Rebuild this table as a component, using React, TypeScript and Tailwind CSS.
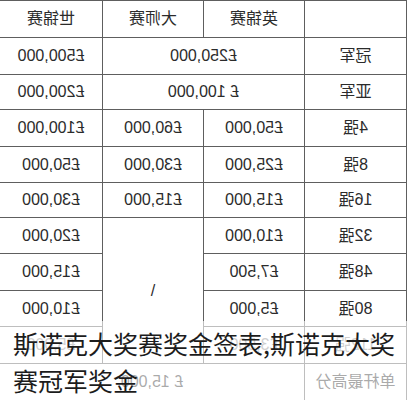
import React from "react";

const td = "border border-[#5e5e5e] text-center align-middle p-0 font-normal";

export default function App() {
  return (
    <div className="relative w-[407px] h-[400px] overflow-hidden bg-white">
      <div className="[transform:scaleX(-1)]">
        <table className="table-fixed border-collapse w-[407px] text-[16px] text-[#2b2b2b] font-['Liberation_Sans','Noto_Sans_CJK_SC',sans-serif]">
          <colgroup>
            <col className="w-[102px]" />
            <col className="w-[101px]" />
            <col className="w-[101px]" />
            <col className="w-[103px]" />
          </colgroup>
          <tbody>
            <tr className="h-[37px]">
              <td className={td}></td>
              <td className={td}>英锦赛</td>
              <td className={td}>大师赛</td>
              <td className={td}>世锦赛</td>
            </tr>
            <tr className="h-[37px]">
              <td className={td}>冠军</td>
              <td className={td} colSpan={2}>£250,000</td>
              <td className={td}>£500,000</td>
            </tr>
            <tr className="h-[35px]">
              <td className={td}>亚军</td>
              <td className={td} colSpan={2}>£ 100,000</td>
              <td className={td}>£200,000</td>
            </tr>
            <tr className="h-[37px]">
              <td className={td}>4强</td>
              <td className={td}>£50,000</td>
              <td className={td}>£60,000</td>
              <td className={td}>£100,000</td>
            </tr>
            <tr className="h-[36px]">
              <td className={td}>8强</td>
              <td className={td}>£25,000</td>
              <td className={td}>£30,000</td>
              <td className={td}>£50,000</td>
            </tr>
            <tr className="h-[35px]">
              <td className={td}>16强</td>
              <td className={td}>£15,000</td>
              <td className={td}>£15,000</td>
              <td className={td}>£30,000</td>
            </tr>
            <tr className="h-[36px]">
              <td className={td}>32强</td>
              <td className={td}>£10,000</td>
              <td className={td} rowSpan={4}>\</td>
              <td className={td}>£20,000</td>
            </tr>
            <tr className="h-[37px]">
              <td className={td}>48强</td>
              <td className={td}>£7,500</td>
              <td className={td}>£15,000</td>
            </tr>
            <tr className="h-[36px]">
              <td className={td}>80强</td>
              <td className={td}>£5,000</td>
              <td className={td}>£10,000</td>
            </tr>
            <tr className="h-[37px] text-[#8a8a8a]">
              <td className={td}>112强</td>
              <td className={td}>£3,500</td>
              <td className={td}>£5,000</td>
            </tr>
            <tr className="h-[37px]">
              <td className={td}>单杆最高分</td>
              <td className={td} colSpan={3}>£ 15,000</td>
            </tr>
          </tbody>
        </table>
      </div>
      <div className="absolute left-0 right-0 top-[321px] bottom-0 bg-white/60 pl-[13px] pt-[4px] text-[25px] leading-[37px] text-[#1c1c1c] font-['Noto_Sans_CJK_SC',sans-serif]">
        斯诺克大奖赛奖金签表,斯诺克大奖赛冠军奖金
      </div>
    </div>
  );
}
